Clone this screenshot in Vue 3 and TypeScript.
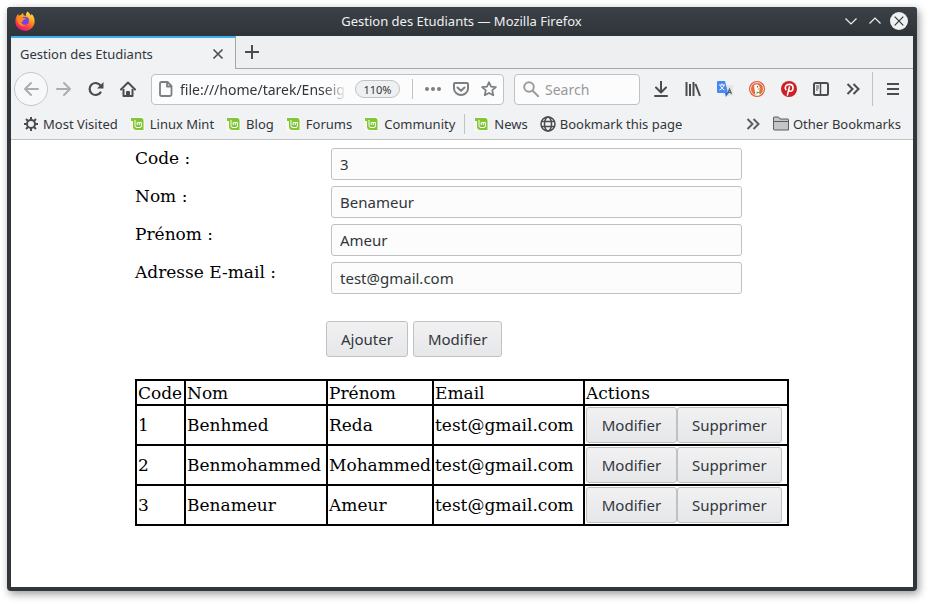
<script setup lang="ts">
import { reactive, ref } from 'vue'

interface Student {
  code: string
  nom: string
  prenom: string
  email: string
}

interface Field {
  key: keyof Student
  label: string
  type: string
}

interface Bookmark {
  label: string
  icon: 'gear' | 'mint' | 'globe'
  divided?: boolean
}

const fields: Field[] = [
  { key: 'code', label: 'Code :', type: 'text' },
  { key: 'nom', label: 'Nom :', type: 'text' },
  { key: 'prenom', label: 'Prénom :', type: 'text' },
  { key: 'email', label: 'Adresse E-mail :', type: 'email' },
]

const bookmarks: Bookmark[] = [
  { label: 'Most Visited', icon: 'gear' },
  { label: 'Linux Mint', icon: 'mint' },
  { label: 'Blog', icon: 'mint' },
  { label: 'Forums', icon: 'mint' },
  { label: 'Community', icon: 'mint' },
  { label: 'News', icon: 'mint', divided: true },
  { label: 'Bookmark this page', icon: 'globe' },
]

const students = ref<Student[]>([
  { code: '1', nom: 'Benhmed', prenom: 'Reda', email: 'test@gmail.com' },
  { code: '2', nom: 'Benmohammed', prenom: 'Mohammed', email: 'test@gmail.com' },
  { code: '3', nom: 'Benameur', prenom: 'Ameur', email: 'test@gmail.com' },
])

const form = reactive<Student>({ code: '3', nom: 'Benameur', prenom: 'Ameur', email: 'test@gmail.com' })
const address = ref('file:///home/tarek/Enseig')
const query = ref('')

function add() {
  students.value.push({ ...form })
}

function update() {
  const found = students.value.find((s) => s.code === form.code)
  if (found) Object.assign(found, form)
}

function edit(student: Student) {
  Object.assign(form, student)
}

function remove(index: number) {
  students.value.splice(index, 1)
}
</script>

<template>
  <div class="window">
    <header class="titlebar">
      <svg class="firefox" viewBox="0 0 20 20" aria-hidden="true">
        <defs>
          <linearGradient id="fox" x1="0.8" y1="0" x2="0.3" y2="1">
            <stop offset="0" stop-color="#fff04a" />
            <stop offset="0.4" stop-color="#ff9a1f" />
            <stop offset="0.75" stop-color="#ff3b47" />
            <stop offset="1" stop-color="#e3128f" />
          </linearGradient>
        </defs>
        <path fill="url(#fox)" d="M12.500.5c1.500 1.200 2.700 2.500 3.200 4 .8-.2.900-1 .800-1.800 2.300 2.200 3.300 4.800 3.100 8-.3 5.200-4.500 9.100-9.700 9.100S.4 15.600.4 10.500C.4 7.500 1.500 5 3.300 2.800c0 .9.200 1.500.600 2 .6-.5 1.300-.7 2.100-.7.500-1 1.300-1.700 2.200-2.100-.2.800 0 1.500.5 2.200L11 5C10.700 3.300 11.300 1.500 12.500.5z" />
        <circle cx="10" cy="9.700" r="4" fill="#7542e5" />
        <path fill="#ff8a1e" d="M2.200 7.400c2-1.800 4.300-1.600 6.300-.5l2.300.2c-.3 1.200-1.300 1.500-2.300 1.700-.2 1.300-1.300 1.800-2.200 2.400.5 2.300 2.500 3.300 4.700 2.600-2 2-5.400 1.500-7-.7-1.200-1.700-1.800-3.500-1.800-5.700z" />
      </svg>
      <h1 class="window-title">Gestion des Etudiants — Mozilla Firefox</h1>
      <div class="window-controls">
        <button type="button" aria-label="Minimize"><svg viewBox="0 0 18 18"><path d="M3.500 6.500 9 12l5.500-5.500" fill="none" stroke="#eff0f1" stroke-width="1.200" /></svg></button>
        <button type="button" aria-label="Maximize"><svg viewBox="0 0 18 18"><path d="M3.500 11.500 9 6l5.500 5.500" fill="none" stroke="#eff0f1" stroke-width="1.200" /></svg></button>
        <button type="button" aria-label="Close"><svg viewBox="0 0 18 18"><circle cx="9" cy="9" r="9" fill="#eff0f1" /><path d="m4.700 4.700 8.600 8.600m0-8.600-8.600 8.600" stroke="#31363b" stroke-width="1.200" /></svg></button>
      </div>
    </header>

    <div class="tabs">
      <div class="tab">
        <span>Gestion des Etudiants</span>
        <button type="button" aria-label="Close tab"><svg class="icon" viewBox="0 0 16 16"><path d="m3.500 3.500 9 9m0-9-9 9" stroke="#4a4c50" stroke-width="1.600" /></svg></button>
      </div>
      <button type="button" class="new-tab" aria-label="New tab"><svg class="icon" viewBox="0 0 16 16"><path d="M8 1v14M1 8h14" stroke="#4a4c50" stroke-width="2" /></svg></button>
    </div>

    <nav class="toolbar" aria-label="Navigation">
      <div class="history">
        <button type="button" class="back" aria-label="Back"><svg class="icon" viewBox="0 0 16 16"><path d="M15 8H2m6-6L2 8l6 6" fill="none" stroke="#acadb0" stroke-width="2" stroke-linecap="round" stroke-linejoin="round" /></svg></button>
        <button type="button" class="tool" aria-label="Forward"><svg class="icon" viewBox="0 0 16 16"><path d="M1 8h13M8 2l6 6-6 6" fill="none" stroke="#acadb0" stroke-width="2" stroke-linecap="round" stroke-linejoin="round" /></svg></button>
        <button type="button" class="tool" aria-label="Reload"><svg class="icon" viewBox="0 0 16 16"><path d="M12.500 11.500A6 6 0 1 1 12.500 4.500" fill="none" stroke="#4a4c50" stroke-width="2.200" stroke-linecap="round" /><path d="M15.500 1v6.500H9z" fill="#4a4c50" /></svg></button>
        <button type="button" class="tool" aria-label="Home"><svg class="icon" viewBox="0 0 16 16"><path d="M1 8.500 8 1.500l7 7" fill="none" stroke="#4a4c50" stroke-width="2" stroke-linecap="round" stroke-linejoin="round" /><path d="M3.500 8v7h9V8M7 15v-4h2v4" fill="none" stroke="#4a4c50" stroke-width="2" stroke-linejoin="round" /></svg></button>
      </div>

      <div class="box url">
        <svg class="icon" viewBox="0 0 16 16"><path d="M3.500 1h6L13.500 5v8.500a1.500 1.500 0 0 1-1.500 1.500H3.500A1.500 1.500 0 0 1 2 13.500v-11A1.500 1.500 0 0 1 3.500 1zM9 1.500v4h4.500" fill="none" stroke="#7b7e82" stroke-width="1.800" stroke-linejoin="round" /></svg>
        <input v-model="address" type="text" aria-label="Address" spellcheck="false" />
        <button type="button" class="zoom">110%</button>
        <span class="rule"></span>
        <button type="button" aria-label="Page actions"><svg class="icon" viewBox="0 0 16 16" fill="#7b7e82"><circle cx="2" cy="8" r="2" /><circle cx="8" cy="8" r="2" /><circle cx="14" cy="8" r="2" /></svg></button>
        <button type="button" aria-label="Save to Pocket"><svg class="icon" viewBox="0 0 16 16"><path d="M2 2h12a1 1 0 0 1 1 1v4.500a7 6.500 0 0 1-14 0V3a1 1 0 0 1 1-1zM4.500 6.500 8 9.800l3.500-3.300" fill="none" stroke="#7b7e82" stroke-width="2" stroke-linecap="round" stroke-linejoin="round" /></svg></button>
        <button type="button" aria-label="Bookmark"><svg class="icon" viewBox="0 0 16 16"><path d="m8 1.200 2 4.400 4.900.5-3.700 3.200 1.100 5L8 11.900l-4.300 2.400 1.100-5L1.100 6.100 6 5.600z" fill="none" stroke="#7b7e82" stroke-width="1.700" stroke-linejoin="round" /></svg></button>
      </div>

      <div class="box search">
        <svg class="icon" viewBox="0 0 16 16"><circle cx="6" cy="6" r="4.800" fill="none" stroke="#9b9c9e" stroke-width="2" /><path d="m9.700 9.700 5.500 5.500" stroke="#9b9c9e" stroke-width="2" stroke-linecap="round" /></svg>
        <input v-model="query" type="text" placeholder="Search" aria-label="Search" />
      </div>

      <div class="extensions">
        <button type="button" class="tool" aria-label="Downloads"><svg class="icon" viewBox="0 0 16 16"><path d="M8 .5V11M3 6.500l5 5 5-5M2 15h12" fill="none" stroke="#4a4c50" stroke-width="2" stroke-linecap="round" stroke-linejoin="round" /></svg></button>
        <button type="button" class="tool" aria-label="Library"><svg class="icon" viewBox="0 0 16 16"><path d="M1.500 1v14M5 3v12M8.500 1v14m2-12 4.500 12" fill="none" stroke="#4a4c50" stroke-width="2" /></svg></button>
        <button type="button" class="tool" aria-label="Translate"><svg class="icon" viewBox="0 0 16 16"><rect x="6" y="4" width="10" height="11" rx="1" fill="#e4e6e9" /><path d="M1 0h7l3 12H1a1 1 0 0 1-1-1V1a1 1 0 0 1 1-1z" fill="#4688f1" /><path d="m8 12 1 4 2.500-4z" fill="#2865d4" /><path d="M2 4h6M5 2.500V4m2 0c-.5 2.300-2.300 4-4.500 5M3.300 4.500C4 6.500 5.500 8 7.500 9" fill="none" stroke="#fff" /><path d="m10.500 13 2-5 2 5m-3.300-1.700h2.600" fill="none" stroke="#56606b" stroke-width="1.200" /></svg></button>
        <button type="button" class="tool" aria-label="DuckDuckGo"><svg class="icon" viewBox="0 0 16 16"><circle cx="8" cy="8" r="8" fill="#de5833" /><circle cx="8" cy="8" r="6.500" fill="#e86a45" stroke="#fff" stroke-width=".8" /><path d="M5 4.500C6.500 3 9.500 3 10.500 5.500c.7 2-.4 3-.2 4.500l.6 3.500c-1.800.8-3.500.6-4.600.1z" fill="#fff" /><path d="M8.500 7.500c1.300-.6 3-.4 4 .1-1 1-2.500 1.500-4 1z" fill="#fdbd10" /><path d="m7.500 10.500 2 .6 2-.8v2.500l-2-.7-1.800.8z" fill="#4cba3c" /><circle cx="8.600" cy="5.800" r=".8" fill="#2d4f8e" /></svg></button>
        <button type="button" class="tool" aria-label="Pinterest"><svg class="icon" viewBox="0 0 16 16"><circle cx="8" cy="8" r="8" fill="#cb2027" /><path d="M4.900 8.700c-1.700-2.500.1-5.300 3.400-5.300 2.400 0 3.700 1.500 3.700 3.300 0 2-1.200 3.600-2.800 3.600-1 0-1.500-.6-1.600-1.100M8.400 6l-2 8" fill="none" stroke="#fff" stroke-width="1.600" stroke-linecap="round" /></svg></button>
        <button type="button" class="tool" aria-label="Sidebar"><svg class="icon" viewBox="0 0 16 16"><rect x="1" y="2" width="14" height="12" rx="1.500" fill="none" stroke="#4a4c50" stroke-width="2" /><path d="M7.500 2v12" stroke="#4a4c50" stroke-width="1.500" /><path d="M3 5h3M3 7h3M3 9h2" stroke="#4a4c50" /></svg></button>
        <button type="button" class="tool" aria-label="More tools"><svg class="icon" viewBox="0 0 16 16"><path d="m2.500 3 5 5-5 5m6-10 5 5-5 5" fill="none" stroke="#4a4c50" stroke-width="2" stroke-linejoin="miter" /></svg></button>
        <span class="tall rule"></span>
        <button type="button" class="tool menu" aria-label="Open menu"><svg class="icon" viewBox="0 0 16 16"><path d="M2 3h12M2 8h12M2 13h12" stroke="#4a4c50" stroke-width="2" /></svg></button>
      </div>
    </nav>

    <nav class="bookmarks" aria-label="Bookmarks">
      <template v-for="b in bookmarks" :key="b.label">
        <span v-if="b.divided" class="rule"></span>
        <a href="#" class="bookmark">
          <svg v-if="b.icon === 'gear'" class="icon" viewBox="0 0 16 16"><circle cx="8" cy="8" r="4" fill="none" stroke="#4a4c50" stroke-width="2" /><path d="M8 1v3M8 12v3M1 8h3M12 8h3M3 3l2.300 2.300M10.700 10.700 13 13M13 3l-2.300 2.300M5.300 10.700 3 13" stroke="#4a4c50" stroke-width="2" /></svg>
          <svg v-else-if="b.icon === 'mint'" class="icon" viewBox="0 0 16 16"><rect x="0" y="1" width="15" height="14" rx="2" fill="#f8f7f6" /><path d="M1 2h10A2.500 2.500 0 0 1 13.500 4.500V14H6.500A3.500 3.500 0 0 1 3 10.500V5H1z" fill="#80c635" /><path d="M5 4v5.500A2 2 0 0 0 7 11.500h2.900A1.500 1.500 0 0 0 11.400 10V6.500M7.200 9V6.500M9.300 9V6.500M7.200 6.500h4.200" fill="none" stroke="#fff" stroke-width="1" /></svg>
          <svg v-else class="icon" viewBox="0 0 16 16"><g fill="none" stroke="#4a4c50" stroke-width="1.500"><circle cx="8" cy="8" r="7" /><ellipse cx="8" cy="8" rx="3.500" ry="7" /><path d="M1.500 5.500h13M1.500 10.500h13" /></g></svg>
          {{ b.label }}
        </a>
      </template>
      <button type="button" class="overflow" aria-label="More bookmarks"><svg class="icon" viewBox="0 0 16 16"><path d="m2.500 3 5 5-5 5m6-10 5 5-5 5" fill="none" stroke="#5b5d61" stroke-width="2" stroke-linejoin="miter" /></svg></button>
      <a href="#" class="bookmark">
        <svg class="icon" viewBox="0 0 16 16"><path d="M.5 13.500v-12q0-.5.500-.5h4.500l1.500 2H15q.5 0 .5.500v10.500H1zM.5 5.500h15" fill="#c4c5c6" stroke="#5a5c5f" /></svg>
        Other Bookmarks
      </a>
    </nav>

    <main class="page">
      <form @submit.prevent="add">
        <div v-for="f in fields" :key="f.key" class="field">
          <label :for="f.key">{{ f.label }}</label>
          <input :id="f.key" v-model="form[f.key]" :type="f.type" />
        </div>
        <div class="actions">
          <button type="submit" class="push">Ajouter</button>
          <button type="button" class="push" @click="update">Modifier</button>
        </div>
      </form>

      <table>
        <colgroup>
          <col class="col-code" />
          <col class="col-nom" />
          <col class="col-prenom" />
          <col class="col-email" />
          <col />
        </colgroup>
        <thead>
          <tr>
            <th>Code</th>
            <th>Nom</th>
            <th>Prénom</th>
            <th>Email</th>
            <th>Actions</th>
          </tr>
        </thead>
        <tbody>
          <tr v-for="(s, i) in students" :key="i">
            <td>{{ s.code }}</td>
            <td>{{ s.nom }}</td>
            <td>{{ s.prenom }}</td>
            <td>{{ s.email }}</td>
            <td>
              <div class="row-actions">
                <button type="button" class="push" @click="edit(s)">Modifier</button>
                <button type="button" class="push" @click="remove(i)">Supprimer</button>
              </div>
            </td>
          </tr>
        </tbody>
      </table>
    </main>
  </div>
</template>

<style>
body {
  background: #fff;
}
</style>

<style scoped>
* {
  box-sizing: border-box;
}

.window {
  display: flex;
  flex-direction: column;
  min-height: calc(100vh - 20px);
  margin: 7px 13px 13px 7px;
  padding: 0 4px 4px;
  border-radius: 4px;
  background: #31363b;
  box-shadow: 2px 3px 8px rgba(0, 0, 0, 0.4);
  color: #31363b;
  font-family: "Noto Sans", sans-serif;
  font-size: 13px;
}

button {
  display: flex;
  align-items: center;
  justify-content: center;
  padding: 0;
  border: 0;
  background: none;
  color: inherit;
  font: inherit;
}

input {
  min-width: 0;
  padding: 0;
  border: 0;
  background: none;
  color: inherit;
  font: inherit;
}

.icon {
  display: block;
  flex: none;
  width: 16px;
  height: 16px;
}

.rule {
  flex: none;
  width: 1px;
  height: 20px;
  background: #c0c2c4;
}

.titlebar {
  display: grid;
  grid-template-columns: 1fr auto 1fr;
  align-items: center;
  height: 29px;
  margin: 0 -4px;
  padding: 0 9px 2px 8px;
  border-radius: 3px 3px 0 0;
  background: linear-gradient(#3c4148, #2f3439);
  color: #eff0f1;
}

.firefox {
  width: 20px;
  height: 20px;
}

.window-title {
  margin: 0;
  font-size: 13px;
  font-weight: 400;
}

.window-controls {
  display: flex;
  justify-content: flex-end;
  gap: 6px;
}

.window-controls svg {
  display: block;
  width: 18px;
  height: 18px;
}

.tabs {
  display: flex;
  height: 33px;
  background: linear-gradient(#a4a6a8, #a4a6a8) bottom / 100% 1px no-repeat #eeeff1;
}

.tab {
  display: flex;
  align-items: center;
  justify-content: space-between;
  width: 225px;
  padding: 0 9px;
  border-top: 2px solid #3daee9;
  border-right: 1px solid #a4a6a8;
  background: #f1f2f4;
}

.new-tab {
  width: 32px;
  height: 32px;
}

.toolbar {
  display: flex;
  align-items: center;
  gap: 10px;
  height: 40px;
  padding-left: 3px;
  background: #f1f2f4;
}

.history,
.extensions {
  display: flex;
  flex: none;
  align-items: center;
}

.back {
  width: 34px;
  height: 34px;
  border: 1px solid #c6c7c9;
  border-radius: 50%;
  background: #f7f8f9;
}

.tool {
  width: 32px;
  height: 32px;
}

.box {
  display: flex;
  align-items: center;
  min-width: 0;
  height: 31px;
  padding: 0 6px;
  border: 1px solid #bfc1c3;
  border-radius: 4px;
  background: #fcfcfc;
}

.box input {
  flex: 1;
  width: 0;
  font-size: 14px;
}

.url {
  flex: 353 1 353px;
  gap: 12px;
  margin-left: -3px;
}

.url input {
  margin-left: -6px;
  margin-right: -4px;
  -webkit-mask-image: linear-gradient(to left, transparent, #000 24px);
  mask-image: linear-gradient(to left, transparent, #000 24px);
}

.zoom {
  width: 45px;
  height: 18px;
  border: 1px solid #c0c2c4;
  border-radius: 9px;
  background: #eff0f1;
  font-size: 11px;
}

.search {
  flex: 126 1 126px;
  gap: 6px;
  padding-left: 8px;
}

.search input::placeholder {
  color: #97999b;
  opacity: 1;
}

.extensions {
  margin-left: -5px;
}

.tall {
  height: 34px;
  margin-left: 3px;
}

.menu {
  width: 40px;
}

.bookmarks {
  display: flex;
  align-items: center;
  gap: 12px;
  height: 31px;
  padding: 0 12px;
  border-bottom: 1px solid #c0c2c4;
  background: #f1f2f4;
  white-space: nowrap;
}

.bookmarks .rule {
  margin: 0 -3px;
}

.bookmark {
  display: flex;
  align-items: center;
  gap: 4px;
  color: inherit;
  text-decoration: none;
}

.overflow {
  margin-left: auto;
}

.page {
  flex: 1;
  padding: 8px 124px 60px;
  background: #fff;
  color: #000;
  font-family: "DejaVu Serif", serif;
  font-size: 17px;
  line-height: 20px;
}

.field {
  display: grid;
  grid-template-columns: 196px 1fr;
  align-items: start;
  margin-bottom: 6px;
  padding-right: 47px;
}

.field input {
  height: 32px;
  padding: 0 8px;
  border: 1px solid #bfc1c3;
  border-radius: 3px;
  background: #fcfcfc;
  color: #31363b;
  font-family: "Noto Sans", sans-serif;
  font-size: 15px;
}

.actions {
  display: flex;
  gap: 5px;
  padding: 21px 0 22px 191px;
}

.push {
  height: 36px;
  padding: 0 14px;
  border: 1px solid #bfc1c3;
  border-radius: 3px;
  background: linear-gradient(#f1f1f2, #e6e7e9);
  color: #31363b;
  font-family: "Noto Sans", sans-serif;
  font-size: 15px;
}

table {
  width: 100%;
  table-layout: fixed;
  border-collapse: collapse;
}

th,
td {
  height: 40px;
  padding: 0 1px;
  border: 2px solid #000;
  font-weight: 400;
  text-align: left;
}

th {
  height: 25px;
}

.col-code {
  width: 49px;
}

.col-nom {
  width: 142px;
}

.col-prenom {
  width: 106px;
}

.col-email {
  width: 151px;
}

.row-actions {
  display: flex;
}

.row-actions .push {
  min-width: 91px;
}
</style>
